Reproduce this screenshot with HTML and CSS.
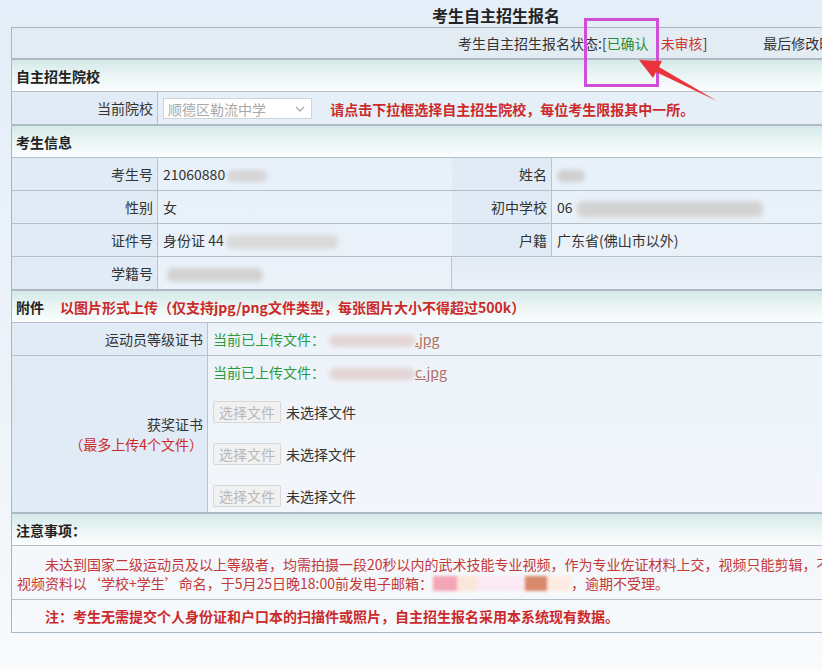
FILE: index.html
```html
<!DOCTYPE html>
<html>
<head>
	<meta charset="utf-8">
	<title>考生自主招生报名</title>
	<link rel="stylesheet" href="styles.css">
</head>
<body>
	<div class="page">
		<div class="title">考生自主招生报名</div>

		<table class="form">
			<colgroup>
				<col class="c1"><col class="c2"><col class="c3"><col class="c4"><col class="c5">
			</colgroup>

			<tr class="status">
				<td colspan="5">考生自主招生报名状态:[<span class="ok">已确认</span><span class="warn">未审核</span>]<span class="modified">最后修改时间：2021-05-20 10:12</span></td>
			</tr>

			<!-- 院校 -->
			<tr class="section"><td colspan="5">自主招生院校</td></tr>
			<tr>
				<td class="label">当前院校</td>
				<td class="value" colspan="4">
					<span class="select">顺德区勒流中学
						<svg class="chev" width="10" height="6" viewBox="0 0 10 6"><path d="M1 1 L5 5 L9 1" fill="none" stroke="#aaa" stroke-width="1.3"/></svg>
					</span>
					<span class="hint">请点击下拉框选择自主招生院校，每位考生限报其中一所。</span>
				</td>
			</tr>

			<!-- 考生信息 -->
			<tr class="section"><td colspan="5">考生信息</td></tr>
			<tr>
				<td class="label">考生号</td>
				<td class="value" colspan="2">21060880<span class="blur b-id"></span></td>
				<td class="label">姓名</td>
				<td class="value"><span class="blur b-name"></span></td>
			</tr>
			<tr>
				<td class="label">性别</td>
				<td class="value" colspan="2">女</td>
				<td class="label">初中学校</td>
				<td class="value">06<span class="blur b-school"></span></td>
			</tr>
			<tr>
				<td class="label">证件号</td>
				<td class="value" colspan="2">身份证 44<span class="blur b-card"></span></td>
				<td class="label">户籍</td>
				<td class="value">广东省(佛山市以外)</td>
			</tr>
			<tr>
				<td class="label">学籍号</td>
				<td class="value" colspan="2"><span class="blur b-reg"></span></td>
				<td class="empty" colspan="2"></td>
			</tr>

			<!-- 附件 -->
			<tr class="section">
				<td colspan="5">附件<span class="attach-hint">以图片形式上传（仅支持jpg/png文件类型，每张图片大小不得超过500k）</span></td>
			</tr>
			<tr>
				<td class="label" colspan="2">运动员等级证书</td>
				<td class="value" colspan="3"><span class="uploaded">当前已上传文件：</span><a class="file" href="#"><span class="blur b-file"></span>.jpg</a></td>
			</tr>
			<tr class="awards">
				<td class="label" colspan="2">获奖证书<br><span class="limit">（最多上传4个文件）</span></td>
				<td class="value" colspan="3">
					<div class="files">
						<div class="current"><span class="uploaded">当前已上传文件：</span><a class="file" href="#"><span class="blur b-file"></span>c.jpg</a></div>
						<div class="picker"><button disabled>选择文件</button>未选择文件</div>
						<div class="picker"><button disabled>选择文件</button>未选择文件</div>
						<div class="picker"><button disabled>选择文件</button>未选择文件</div>
					</div>
				</td>
			</tr>

			<!-- 注意事项 -->
			<tr class="section"><td colspan="5">注意事项：</td></tr>
			<tr>
				<td class="notice" colspan="5">未达到国家二级运动员及以上等级者，均需拍摄一段20秒以内的武术技能专业视频，作为专业佐证材料上交，视频只能剪辑，不得添加特效。<br>视频资料以‘学校+学生’命名，于5月25日晚18:00前发电子邮箱：<span class="mail"><i class="m1"></i><i class="m2"></i><i class="m3"></i><i class="m4"></i><i class="m5"></i></span>，逾期不受理。</td>
			</tr>
			<tr>
				<td class="note" colspan="5">注：考生无需提交个人身份证和户口本的扫描件或照片，自主招生报名采用本系统现有数据。</td>
			</tr>
		</table>

		<!-- annotation -->
		<div class="mark"></div>
		<svg class="arrow" width="822" height="669" viewBox="0 0 822 669">
			<polygon points="639,60 662,61 659,67 717,101 656,72 653,78" fill="#e8343a"/>
		</svg>
	</div>
</body>
</html>
```

FILE: styles.css
```css
html, body {
	margin: 0;
	padding: 0;
	height: 100%;
	overflow: hidden;
}

body {
	background: linear-gradient(to bottom, #e3eef8 0%, #edf3f9 55%, #f8fafc 100%);
	font-family: "Noto Sans CJK SC", "Noto Sans", sans-serif;
	font-size: 14px;
	color: #333;
}

.page {
	position: relative;
	width: 970px;
	padding-left: 11px;
}

.title {
	height: 27px;
	padding-top: 4px;
	box-sizing: border-box;
	line-height: 22px;
	text-align: center;
	font-size: 16px;
	font-weight: bold;
	color: #222;
}

/* Table */
.form {
	width: 970px;
	table-layout: fixed;
	border-collapse: collapse;
	border: 1px solid #aab6c2;
}
.form col.c1 { width: 146px; }
.form col.c2 { width: 50px; }
.form col.c3 { width: 244px; }
.form col.c4 { width: 100px; }
.form col.c5 { width: 430px; }

.form td {
	height: 32px;
	padding: 0 5px;
	border-top: 1px solid #b4bfca;
	line-height: 20px;
	white-space: nowrap;
}

.form .status td {
	height: 30px;
	background: #e3ebf3;
	padding-left: 446px;
	border-top: 0;
}
.status .ok    { color: #2a8f36; }
.status .warn  { color: #cc3a30; margin-left: 12px; }
.status .modified { margin-left: 56px; }

.section td {
	height: 31px;
	border-top: 2px solid #aeb9c3;
	background: linear-gradient(to bottom, #d4e9e9 0%, #eef7f6 60%, #fbfdfd 100%);
	font-weight: bold;
	color: #222;
	padding-left: 4px;
}
.attach-hint {
	color: #cc2a2a;
	margin-left: 16px;
}

.label {
	background: #e1ebf5;
	text-align: right;
	border-right: 1px solid #b4c4d4;
}
.form td.label { padding-right: 4px; }

.empty {
	background: linear-gradient(to bottom, #e2eaf5, #eaf1f9);
	border-left: 1px solid #b4c4d4;
}

/* select */
.select {
	display: inline-flex;
	align-items: center;
	justify-content: space-between;
	width: 149px;
	height: 21px;
	box-sizing: border-box;
	padding: 0 6px 0 4px;
	border: 1px solid #cfd4d8;
	background: #fff;
	color: #a8a8a8;
	vertical-align: middle;
}
.chev { margin-top: 1px; }
.hint {
	color: #cc2a2a;
	font-weight: bold;
	margin-left: 15px;
	vertical-align: middle;
}

/* blurred data */
.blur {
	display: inline-block;
	height: 12px;
	vertical-align: middle;
	background: #cfcfcf;
	border-radius: 6px;
	filter: blur(2px);
}
.b-id     { width: 40px; margin-left: 2px; background: #d6d6d6; }
.b-name   { width: 28px; }
.b-school { width: 186px; height: 16px; margin-left: 4px; background: #d3d3d3; }
.b-card   { width: 112px; height: 14px; margin-left: 2px; background: #dadada; }
.b-reg    { width: 96px; height: 14px; margin-left: 4px; background: #d3d3d3; }
.b-file   { width: 86px; height: 12px; margin-left: 4px; background: #e4d6d6; }

/* attachments */
.uploaded { color: #2a9a3c; }
.file {
	color: #b07060;
	text-decoration: underline;
}
.awards td { height: 156px; }
.awards .label { line-height: 20px; }
.limit { color: #cc2a2a; }
.awards .value { vertical-align: top; }
.files {
	display: flex;
	flex-direction: column;
	gap: 20px;
	padding-top: 5px;
}
.files > div {
	height: 22px;
	line-height: 22px;
}
.files .current { margin-bottom: -2px; }
.picker {
	display: flex;
	align-items: center;
	gap: 5px;
}
.picker button {
	height: 22px;
	width: 68px;
	padding: 0;
	font-family: inherit;
	font-size: 14px;
	color: #b8b8b8;
	background: #f1f1f1;
	border: 1px solid #d8d8d8;
	border-radius: 2px;
}

/* notes */
.form td.notice {
	height: 38px;
	padding: 9px 5px 6px;
	line-height: 19px;
	text-indent: 28px;
	color: #c43838;
	white-space: normal;
}
.mail {
	display: inline-block;
	height: 15px;
	line-height: 0;
	vertical-align: -2px;
	filter: blur(1.5px);
	text-indent: 0;
}
.mail i { display: inline-block; height: 15px; }
.mail .m1 { width: 24px; background: #f4a5b6; }
.mail .m2 { width: 20px; background: #fbe6da; }
.mail .m3 { width: 48px; background: #fbeaf3; }
.mail .m4 { width: 22px; background: #d98a6c; }
.mail .m5 { width: 24px; background: #fcebe0; }

.form td.note {
	padding-left: 33px;
	color: #cc2a2a;
	font-weight: bold;
}

/* annotation overlay */
.mark {
	position: absolute;
	left: 584px;
	top: 18px;
	width: 75px;
	height: 69px;
	box-sizing: border-box;
	border: 3px solid #cf4fd8;
}
.arrow {
	position: absolute;
	left: 0;
	top: 0;
}
```
